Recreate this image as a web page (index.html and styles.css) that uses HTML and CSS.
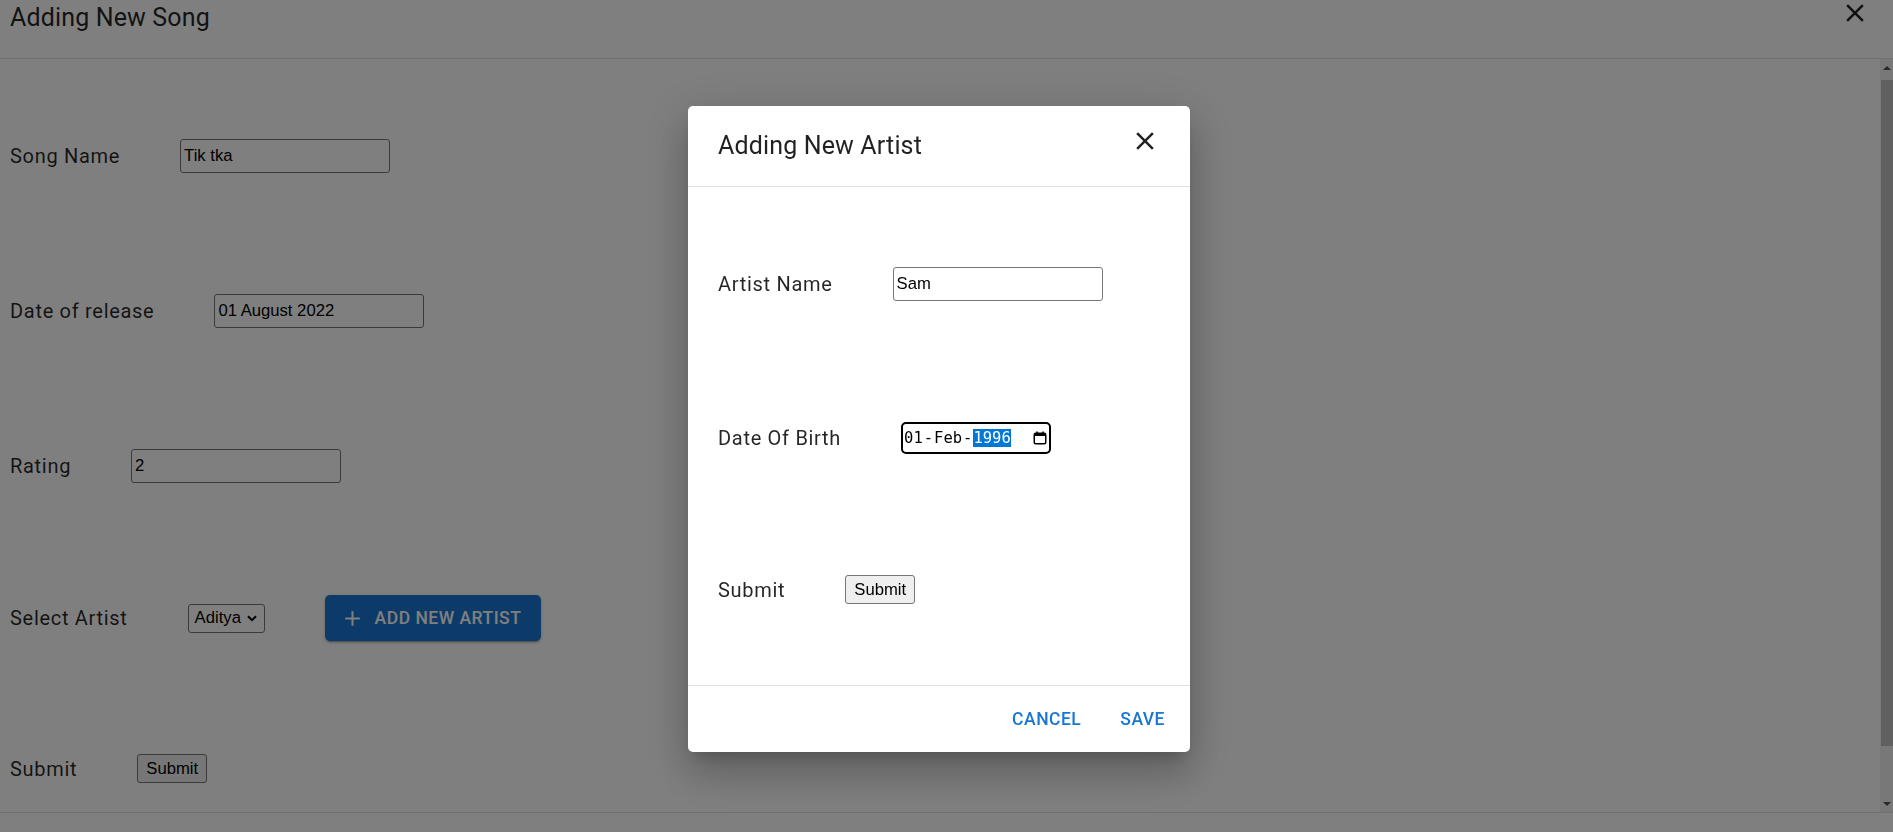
FILE: index.html
```html
<!DOCTYPE html>
<html lang="en">
<head>
<meta charset="utf-8">
<title>Adding New Song</title>
<link rel="stylesheet" href="styles.css">
</head>
<body>
<div class="screen">
  <header class="top">
    <h1 class="top-title">Adding New Song</h1>
    <span class="icon-btn top-close">
      <svg class="close-svg" viewBox="0 0 24 24" width="30" height="30"><path d="M19 6.41 17.59 5 12 10.59 6.41 5 5 6.41 10.59 12 5 17.59 6.41 19 12 13.41 17.59 19 19 17.59 13.41 12z"/></svg>
    </span>
  </header>
  <div class="main-area">
    <main class="content">
      <div class="row">
        <label class="label">Song Name</label>
        <input class="field" type="text" value="Tik tka">
      </div>
      <div class="row">
        <label class="label">Date of release</label>
        <input class="field" type="text" value="01 August 2022">
      </div>
      <div class="row">
        <label class="label">Rating</label>
        <input class="field" type="text" value="2">
      </div>
      <div class="row row-tight">
        <label class="label">Select Artist</label>
        <div class="select"><span>Aditya</span><svg class="chev" viewBox="0 0 10 7" width="10" height="7"><path d="M1 1.2 5 5.2 9 1.2" fill="none" stroke="#000" stroke-width="2"/></svg></div>
        <button class="add-btn"><svg class="plus" viewBox="0 0 24 24" width="25" height="25"><path d="M19 13h-6v6h-2v-6H5v-2h6V5h2v6h6v2z"/></svg><span>Add New Artist</span></button>
      </div>
      <div class="row row-tight2">
        <label class="label">Submit</label>
        <button class="native-btn">Submit</button>
      </div>
    </main>
    <div class="scrollbar">
      <div class="sb-arrow"><span class="tri tri-up"></span></div>
      <div class="sb-track"><div class="sb-thumb"></div></div>
      <div class="sb-arrow"><span class="tri tri-down"></span></div>
    </div>
  </div>
  <footer class="bottom"></footer>
</div>

<div class="backdrop">
  <div class="dialog">
    <div class="dlg-head">
      <h2 class="dlg-title">Adding New Artist</h2>
      <span class="icon-btn dlg-close">
        <svg class="close-svg" viewBox="0 0 24 24" width="30" height="30"><path d="M19 6.41 17.59 5 12 10.59 6.41 5 5 6.41 10.59 12 5 17.59 6.41 19 12 13.41 17.59 19 19 17.59 13.41 12z"/></svg>
      </span>
    </div>
    <div class="dlg-body">
      <div class="row">
        <label class="label">Artist Name</label>
        <input class="field" type="text" value="Sam">
      </div>
      <div class="row">
        <label class="label">Date Of Birth</label>
        <div class="date"><span class="date-text">01<span class="dash">-</span>Feb<span class="dash">-</span><span class="sel">1996</span></span>
          <svg class="cal" viewBox="0 0 14 14" width="14" height="14"><rect x="1.25" y="2.25" width="11.5" height="10.5" rx="1.5" fill="none" stroke="#000" stroke-width="1.5"/><rect x="1" y="2" width="12" height="3" fill="#000"/><rect x="3.2" y="0.5" width="1.6" height="2.5" fill="#000"/><rect x="9.2" y="0.5" width="1.6" height="2.5" fill="#000"/></svg>
        </div>
      </div>
      <div class="row">
        <label class="label">Submit</label>
        <button class="native-btn">Submit</button>
      </div>
    </div>
    <div class="dlg-actions">
      <button class="text-btn">Cancel</button>
      <button class="text-btn">Save</button>
    </div>
  </div>
</div>
</body>
</html>
```

FILE: styles.css
```css
* { box-sizing: border-box; }

html, body {
  margin: 0;
  height: 100%;
  overflow: hidden;
}

body {
  font-family: Roboto, "Liberation Sans", Arial, sans-serif;
  color: rgba(0, 0, 0, 0.87);
  background: #fff;
}

.screen {
  height: 100vh;
  display: flex;
  flex-direction: column;
}

.top {
  flex: none;
  height: 59px;
  border-bottom: 1px solid #e0e0e0;
  display: flex;
  justify-content: space-between;
  align-items: flex-start;
  padding: 0 23px 0 10px;
}

.top-title {
  margin: 0;
  font-size: 25px;
  font-weight: 400;
  line-height: 36px;
  letter-spacing: 0.15px;
}

.icon-btn {
  display: inline-flex;
  width: 30px;
  height: 30px;
}

.close-svg { fill: rgba(0, 0, 0, 0.87); display: block; }

.top-close { margin-top: -2px; }

.main-area {
  flex: none;
  height: 754px;
  display: flex;
  border-bottom: 1px solid #e0e0e0;
}

.content {
  flex: 1;
  padding: 80px 10px 0;
}

.row {
  display: flex;
  align-items: center;
  gap: 60px;
}

.row + .row { margin-top: 121px; }
.row + .row.row-tight { margin-top: 112px; }
.row + .row.row-tight2 { margin-top: 113px; }

.label {
  font-size: 20px;
  line-height: 24px;
  font-weight: 400;
  letter-spacing: 0.7px;
  color: rgba(0, 0, 0, 0.85);
}

.field {
  width: 210px;
  height: 34px;
  border: 1px solid #767676;
  border-radius: 3px;
  padding: 0 3px;
  font: 16.67px "Liberation Sans", Arial, sans-serif;
  color: #000;
  background: #fff;
  outline: none;
}

.select {
  width: 77px;
  height: 29px;
  border: 1px solid #767676;
  border-radius: 3px;
  display: flex;
  align-items: center;
  justify-content: space-between;
  padding: 0 7px 0 6px;
  font: 16.67px "Liberation Sans", Arial, sans-serif;
  color: #000;
  background: #fff;
}

.chev { display: block; margin-top: 1px; }

.add-btn {
  height: 46px;
  display: inline-flex;
  align-items: center;
  padding: 0 20px;
  background: #1976d2;
  color: #fff;
  border: none;
  border-radius: 5px;
  font-family: Roboto, sans-serif;
  font-weight: 500;
  font-size: 17.5px;
  letter-spacing: 0.5px;
  text-transform: uppercase;
  box-shadow: 0 3px 1px -2px rgba(0,0,0,0.2), 0 2px 2px 0 rgba(0,0,0,0.14), 0 1px 5px 0 rgba(0,0,0,0.12);
}

.plus {
  fill: #fff;
  display: block;
  margin: 0 10px 0 -5px;
}

.native-btn {
  height: 29px;
  padding: 0 8px;
  font: 16.67px "Liberation Sans", Arial, sans-serif;
  color: #000;
  background: #efefef;
  border: 1px solid #767676;
  border-radius: 3px;
}

.scrollbar {
  flex: none;
  width: 13px;
  background: #f1f1f1;
  display: flex;
  flex-direction: column;
}

.sb-arrow {
  height: 17px;
  flex: none;
  display: flex;
  align-items: center;
  justify-content: center;
}

.tri {
  width: 0;
  height: 0;
  border-left: 4px solid transparent;
  border-right: 4px solid transparent;
}
.tri-up { border-bottom: 4px solid #505050; }
.tri-down { border-top: 4px solid #505050; }

.sb-track {
  flex: 1;
  padding-top: 4px;
}

.sb-thumb {
  height: 666px;
  margin-left: 1px;
  background: #c1c1c1;
}

.bottom { flex: 1; }

/* modal */
.backdrop {
  position: fixed;
  inset: 0;
  background: rgba(0, 0, 0, 0.5);
  display: flex;
  justify-content: center;
  align-items: flex-start;
  padding: 106px 15px 0 0;
}

.dialog {
  width: 502px;
  height: 646px;
  background: #fff;
  border-radius: 5px;
  box-shadow: 0 11px 15px -7px rgba(0,0,0,0.2), 0 24px 38px 3px rgba(0,0,0,0.14), 0 9px 46px 8px rgba(0,0,0,0.12);
  display: flex;
  flex-direction: column;
}

.dlg-head {
  flex: none;
  display: flex;
  justify-content: space-between;
  align-items: flex-start;
  padding: 0 30px;
  border-bottom: 1px solid #e0e0e0;
}

.dlg-title {
  margin: 0;
  padding: 20px 0;
  font-size: 25px;
  line-height: 40px;
  font-weight: 400;
  letter-spacing: 0.15px;
}

.dlg-close { margin-top: 20px; }

.dlg-body {
  flex: 1;
  padding: 80px 30px 0;
}

.date {
  width: 150px;
  height: 32px;
  border: 2px solid #000;
  border-radius: 5px;
  display: flex;
  align-items: center;
  padding: 0 2px 0 1px;
  background: #fff;
}

.date-text {
  font-family: "DejaVu Sans Mono", "Liberation Mono", monospace;
  font-size: 15.5px;
  line-height: 20px;
  color: #000;
}

.dash {
  padding: 0 1px;
}

.sel {
  background: #0078d7;
  color: #fff;
}

.cal { display: block; margin-left: auto; }

.dlg-actions {
  flex: none;
  height: 67px;
  border-top: 1px solid #e0e0e0;
  display: flex;
  justify-content: flex-end;
  align-items: center;
  gap: 19px;
  padding: 0 15px;
}

.text-btn {
  height: 45px;
  padding: 0 10px;
  background: none;
  border: none;
  font-family: Roboto, sans-serif;
  font-weight: 500;
  font-size: 17.5px;
  letter-spacing: 0.5px;
  text-transform: uppercase;
  color: #1976d2;
}
```
